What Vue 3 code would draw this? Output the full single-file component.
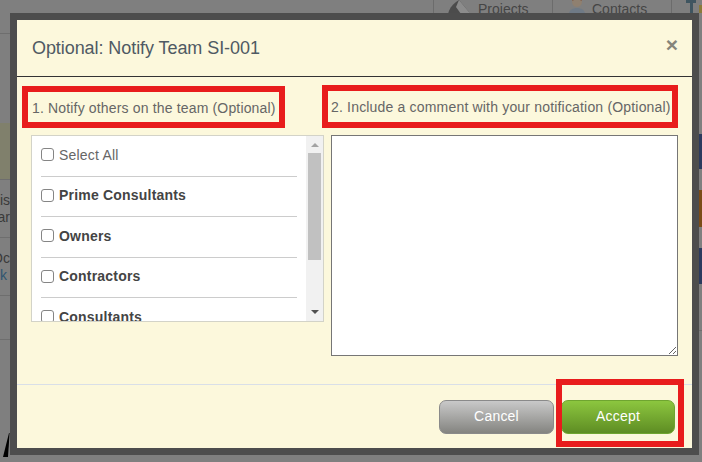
<template>
  <div class="page">
    <div class="behind">
      <div class="tabs">
        <div class="tab tab-projects">
          <svg class="tab-icon" width="21" height="14" viewBox="0 0 21 14"><path d="M0 14 C1 9 4 5 8 2 L11 0 L21 12 L21 14 Z" fill="#4c4c4c" /><path d="M11 0 L21 12 L21 14 L13 14 L8 7 Z" fill="#8c8c8c" /></svg>
          <span>Projects</span>
        </div>
        <div class="tab tab-contacts">
          <svg class="tab-icon" width="18" height="14" viewBox="0 0 18 14"><path d="M1 14 C1 10 5 8 9 8 C13 8 17 10 17 14 Z" fill="#6f7a86" /><circle cx="9" cy="2" r="5" fill="#8f8070" /><path d="M4 1 C5 -2 13 -2 14 1 C11 -1 7 -1 4 1 Z" fill="#7a4a32" /></svg>
          <span>Contacts</span>
        </div>
        <div class="tab tab-last">
          <svg width="16" height="14" viewBox="0 0 16 14"><path d="M0 0 H10 V3 H7 V14 H4 V3 H0 Z" fill="#3f5560" /><rect x="13" y="5" width="3" height="8" fill="#8a7a3a" /></svg>
        </div>
      </div>
      <div class="left-stub">
        <div class="stub stub-top"></div>
        <div class="stub stub-yellow"></div>
        <div class="stub stub-text"><span>his</span><span>ar</span></div>
        <div class="stub stub-text"><span>Oc</span><span class="link">k</span></div>
        <div class="stub stub-plain"></div>
      </div>
      <svg class="wedge" width="7" height="24" viewBox="0 0 7 24"><path d="M6 0 L6.6 0 L5 24 L0 24 Z" fill="#000" /></svg>
      <div class="right-stub">
        <div class="thumb thumb-blue first"></div>
        <div class="thumb thumb-orange"></div>
        <div class="thumb thumb-blue"></div>
        <div class="right-line"></div>
      </div>
    </div>

    <div class="modal">
      <div class="modal-head">
        <h4>Optional: Notify Team SI-001</h4>
        <span class="close">×</span>
      </div>
      <div class="labels">
        <div class="label label-left">1. Notify others on the team (Optional)</div>
        <div class="label label-right">2. Include a comment with your notification (Optional)</div>
      </div>
      <div class="panes">
        <div class="list">
          <div class="list-scroll">
            <label v-for="g in groups" :key="g.name" :class="['row', { bold: g.bold }]">
              <input type="checkbox" />
              <span>{{ g.name }}</span>
            </label>
          </div>
          <div class="scrollbar">
            <i class="arrow up"></i>
            <div class="thumb-bar"></div>
            <i class="arrow down"></i>
          </div>
        </div>
        <textarea class="comment"></textarea>
      </div>
      <div class="modal-foot">
        <button class="btn cancel">Cancel</button>
        <button class="btn accept">Accept</button>
        <div class="accept-mark"></div>
      </div>
    </div>
  </div>
</template>

<script setup>
const groups = [
  { name: "Select All", bold: false },
  { name: "Prime Consultants", bold: true },
  { name: "Owners", bold: true },
  { name: "Contractors", bold: true },
  { name: "Consultants", bold: true }
];
</script>

<style scoped>
.page { position: relative; width: 702px; height: 462px; overflow: hidden; background: #7f7f7f; font-family: "Liberation Sans", Arial, sans-serif; }

.behind { position: absolute; inset: 0; }
.tabs { display: flex; margin-left: 433px; height: 16px; color: #454545; font-size: 14px; }
.tab { display: flex; align-items: flex-start; border-left: 1px solid #6c6c6c; height: 16px; box-sizing: border-box; line-height: 19px; }
.tab-projects { width: 119px; padding-left: 14px; gap: 9px; }
.tab-contacts { width: 119px; padding-left: 15px; gap: 6px; }
.tab-last { padding-left: 14px; }
.left-stub { position: absolute; left: 0; top: 33px; width: 10px; }
.stub { border-top: 1px solid #6e6e6e; box-sizing: border-box; overflow: hidden; }
.stub-top { height: 90px; }
.stub-yellow { height: 56px; background: #80806c; border-top: 0; }
.stub-text { height: 58px; display: flex; flex-direction: column; justify-content: center; font-size: 14px; line-height: 17px; color: #3a3a3a; align-items: flex-end; white-space: nowrap; }
.stub-plain { height: 45px; border-bottom: 1px solid #6e6e6e; }
.link { align-self: flex-start; color: #2f5570; }
.wedge { position: absolute; left: 3px; top: 433px; }
.right-stub { position: absolute; right: 0; top: 134px; width: 3px; display: flex; flex-direction: column; }
.thumb { height: 36px; margin-bottom: 21px; }
.thumb.first { height: 35px; }
.thumb-orange { height: 37px; background: #7a4c18; }
.thumb-blue { background: #2b3a5e; }
.right-line { border-top: 1px solid #6e6e6e; margin-top: 25px; }

.modal { position: absolute; left: 10px; top: 13px; width: 689px; height: 442px; box-sizing: border-box; border: 7px solid #4d4d4d; background: #fcf8dc; }
.modal-head { height: 56px; border-bottom: 1px solid #333; display: flex; align-items: center; justify-content: space-between; padding: 0 14px 0 15px; }
.modal-head h4 { margin: 0; font-size: 18px; font-weight: normal; color: #4f5a63; letter-spacing: -0.07px; }
.close { font-size: 21px; font-weight: bold; color: #85857a; line-height: 1; margin-top: -7px; }

.labels { display: flex; align-items: flex-end; padding-left: 5px; gap: 37px; margin-top: 8px; }
.label { box-sizing: border-box; border: 6px solid #e81c1c; font-size: 14px; color: #666; line-height: 32px; white-space: nowrap; }
.label-left { width: 263px; height: 42px; padding-left: 4px; letter-spacing: 0.16px; }
.label-right { width: 356px; height: 43px; padding-left: 3px; letter-spacing: 0.18px; }

.panes { display: flex; align-items: flex-start; gap: 7px; padding: 7px 0 0 14px; }
.list { width: 293px; height: 187px; box-sizing: border-box; border: 1px solid #d3d3c8; background: #fff; display: flex; overflow: hidden; }
.list-scroll { flex: 1; padding: 0 9px; overflow: hidden; }
.row { display: flex; align-items: center; gap: 5px; height: 40.5px; padding-bottom: 2px; box-sizing: border-box; border-bottom: 1px solid #ccc; font-size: 14px; color: #666; letter-spacing: 0.2px; }
.row.bold { font-weight: bold; color: #444; }
.row input { appearance: none; width: 13px; height: 13px; margin: 0; box-sizing: border-box; border: 1px solid #858585; border-radius: 3px; background: #fff; }
.scrollbar { width: 17px; background: #f1f1f1; display: flex; flex-direction: column; align-items: center; }
.arrow { width: 0; height: 0; border-left: 4px solid transparent; border-right: 4px solid transparent; }
.arrow.up { border-bottom: 4px solid #a3a3a3; margin-top: 7px; }
.arrow.down { border-top: 4px solid #505050; margin-bottom: 7px; }
.thumb-bar { width: 13px; height: 107px; background: #c1c1c1; margin: 6px 0 auto; }
.comment { width: 347px; height: 221px; box-sizing: border-box; border: 1px solid #767676; background: #fff; margin: 0; padding: 2px; display: block; outline: none; }

.modal-foot { position: relative; margin-top: 28px; height: 63px; border-top: 1px solid #d9dfe8; display: flex; justify-content: flex-end; align-items: flex-start; gap: 7px; padding: 15px 17px 0 0; box-sizing: border-box; }
.btn { height: 34px; box-sizing: border-box; border-radius: 7px; color: #fff; font-family: inherit; font-size: 14px; letter-spacing: 0.2px; padding: 0 0 2px; }
.cancel { width: 115px; border: 1px solid #8a8a8a; background: linear-gradient(#c9c9c9, #848480); }
.accept { width: 114px; border: 1px solid #6fa530; background: linear-gradient(#8cc63f, #5e8d23); }
.accept-mark { position: absolute; left: 539px; top: -6px; width: 128px; height: 68px; box-sizing: border-box; border: 6px solid #e81c1c; pointer-events: none; }
</style>
